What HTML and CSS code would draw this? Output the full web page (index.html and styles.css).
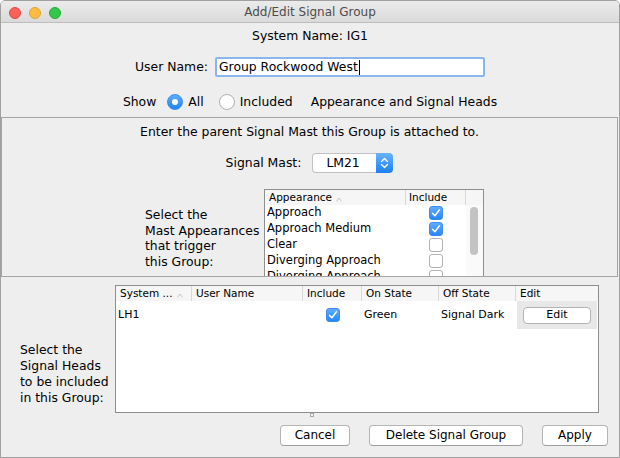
FILE: index.html
```html
<!DOCTYPE html>
<html>
<head>
<meta charset="utf-8">
<title>Add/Edit Signal Group</title>
<link rel="stylesheet" href="styles.css">
</head>
<body>
<div class="window">
  <div class="titlebar">
    <div class="lights"><span class="light red"></span><span class="light yellow"></span><span class="light green"></span></div>
    <div class="title">Add/Edit Signal Group</div>
    <div></div>
  </div>

  <div class="row sysname">System Name: IG1</div>

  <div class="row userrow">
    <span>User Name:</span>
    <div class="field"><span>Group Rockwood West</span><span class="caret"></span></div>
  </div>

  <div class="row showrow">
    <span>Show</span>
    <span class="radio on first"></span><span class="rlabel">All</span>
    <span class="radio second"></span><span class="rlabel">Included</span>
    <span class="showtext">Appearance and Signal Heads</span>
  </div>

  <div class="panel">
    <div class="row intro">Enter the parent Signal Mast this Group is attached to.</div>
    <div class="row mastrow">
      <span>Signal Mast:</span>
      <div class="combo">
        <span class="combo-value">LM21</span>
        <span class="combo-arrows">
          <svg width="17" height="20" viewBox="0 0 17 20"><path d="M5.5 8.5 L8.5 5.5 L11.5 8.5" stroke="#fff" stroke-width="1.3" fill="none" stroke-linecap="round" stroke-linejoin="round"/><path d="M5.5 11.5 L8.5 14.5 L11.5 11.5" stroke="#fff" stroke-width="1.3" fill="none" stroke-linecap="round" stroke-linejoin="round"/></svg>
        </span>
      </div>
    </div>
    <div class="appgrid">
      <div class="desc">Select the<br>Mast Appearances<br>that trigger<br>this Group:</div>
      <div class="apptable">
        <div class="thead">
          <span class="hc ac1">Appearance<svg class="sort" width="6" height="5" viewBox="0 0 6 5"><path d="M0.5 4.5 L3 1 L5.5 4.5" stroke="#c4c4c4" stroke-width="1" fill="none"/></svg></span>
          <span class="hc ac2">Include</span>
          <span class="hc ac3 last"></span>
        </div>
        <div class="atbody">
          <div class="atrows">
            <div class="arow"><span class="aname">Approach</span><span class="acb"><span class="cb on"><svg width="14" height="14" viewBox="0 0 14 14"><path d="M3.6 7.4 L5.9 9.8 L10.4 3.9" stroke="#fff" stroke-width="1.5" fill="none" stroke-linecap="round" stroke-linejoin="round"/></svg></span></span></div>
            <div class="arow"><span class="aname">Approach Medium</span><span class="acb"><span class="cb on"><svg width="14" height="14" viewBox="0 0 14 14"><path d="M3.6 7.4 L5.9 9.8 L10.4 3.9" stroke="#fff" stroke-width="1.5" fill="none" stroke-linecap="round" stroke-linejoin="round"/></svg></span></span></div>
            <div class="arow"><span class="aname">Clear</span><span class="acb"><span class="cb"></span></span></div>
            <div class="arow"><span class="aname">Diverging Approach</span><span class="acb"><span class="cb"></span></span></div>
            <div class="arow"><span class="aname">Diverging Approach</span><span class="acb"><span class="cb"></span></span></div>
          </div>
          <div class="vscroll"><div class="thumb"></div></div>
        </div>
      </div>
    </div>
  </div>

  <div class="heads">
    <div class="desc2">Select the<br>Signal Heads<br>to be included<br>in this Group:</div>
    <div class="htable">
      <div class="thead">
        <span class="hc w1">System ...<svg class="sort" width="6" height="5" viewBox="0 0 6 5"><path d="M0.5 4.5 L3 1 L5.5 4.5" stroke="#c4c4c4" stroke-width="1" fill="none"/></svg></span>
        <span class="hc w2">User Name</span>
        <span class="hc w3">Include</span>
        <span class="hc w4">On State</span>
        <span class="hc w5">Off State</span>
        <span class="hc w6 last">Edit</span>
      </div>
      <div class="htrow">
        <span class="td w1">LH1</span>
        <span class="td w2"></span>
        <span class="td w3 center"><span class="cb on"><svg width="14" height="14" viewBox="0 0 14 14"><path d="M3.6 7.4 L5.9 9.8 L10.4 3.9" stroke="#fff" stroke-width="1.5" fill="none" stroke-linecap="round" stroke-linejoin="round"/></svg></span></span>
        <span class="td w4">Green</span>
        <span class="td w5">Signal Dark</span>
        <span class="td w6 editcell"><span class="editbtn">Edit</span></span>
      </div>
    </div>
  </div>

  <div class="grip"><span></span></div>

  <div class="buttons">
    <div class="btn cancel">Cancel</div>
    <div class="btn delete">Delete Signal Group</div>
    <div class="btn apply">Apply</div>
  </div>
</div>
</body>
</html>
```

FILE: styles.css
```css
* { box-sizing: border-box; margin: 0; padding: 0; }
html, body { width: 620px; height: 458px; overflow: hidden; background: #ffffff; }
body { font-family: "DejaVu Sans", sans-serif; font-size: 12.4px; color: #000; line-height: 1.2; }

.window {
  width: 620px; height: 458px;
  border: 1px solid #a0a0a0;
  border-radius: 5px 5px 0 0;
  background: #eeeeee;
  display: flex; flex-direction: column;
  overflow: hidden;
}

.titlebar {
  flex: none; height: 22px; padding-top: 2px;
  display: grid; grid-template-columns: 1fr auto 1fr; align-items: center;
  background: linear-gradient(#ebebeb, #dadada);
  border-bottom: 1px solid #bdbdbd;
}
.lights { display: flex; gap: 8px; padding-left: 8px; }
.light { width: 12px; height: 12px; border-radius: 50%; }
.red { background: #fc605b; border: 1px solid #de4a45; }
.yellow { background: #fdbc40; border: 1px solid #dea236; }
.green { background: #34c84a; border: 1px solid #27aa35; }
.title { color: #4d4d4d; font-size: 12px; }

.row { flex: none; display: flex; align-items: center; justify-content: center; }
.sysname { height: 26px; }
.userrow { height: 36px; gap: 7px; }
.field {
  width: 270px; height: 20px;
  border: 2px solid #8ab6ee; border-radius: 2px;
  background: #fff;
  display: flex; align-items: center; padding-left: 2px;
}
.caret { width: 1px; height: 15px; background: #000; margin-left: 1px; }

.showrow { height: 32px; padding-top: 2px; }
.radio {
  width: 16px; height: 16px; border-radius: 50%;
  background: #fff; border: 1px solid #b0b0b0;
  display: inline-flex; align-items: center; justify-content: center;
}
.radio.on { background: linear-gradient(#5eaafb, #2185f8); border-color: #3a8ef2; }
.radio.on::after { content: ""; width: 6px; height: 6px; border-radius: 50%; background: #fff; }
.radio.first { margin-left: 11px; }
.radio.second { margin-left: 15px; }
.rlabel { margin-left: 5px; }
.showtext { margin-left: 18px; }

.panel {
  flex: none; height: 160px; margin-right: 1px;
  border: 1px solid #a4a4a4;
  overflow: hidden;
  display: flex; flex-direction: column;
}
.intro { height: 28px; }
.mastrow { height: 34px; gap: 11px; }
.combo { display: flex; width: 81px; height: 20px; }
.combo-value {
  flex: 1; display: flex; align-items: center; padding-left: 13px;
  background: #fff; border: 1px solid #c2c2c2; border-right: none;
  border-radius: 4px 0 0 4px;
}
.combo-arrows {
  width: 17px; height: 20px; display: flex;
  background: linear-gradient(#6bb3fb, #1a80f8);
  border-radius: 0 4px 4px 0;
}

.appgrid { flex: none; display: flex; align-items: center; margin-top: 9px; padding-left: 143px; }
.desc { width: 119px; line-height: 15.5px; white-space: nowrap; }
.apptable {
  flex: none; width: 220px; height: 98px;
  border: 1px solid #8e8e8e; background: #fff;
  font-size: 11.5px; display: flex; flex-direction: column;
}
.thead { flex: none; display: flex; height: 15px; background: #f6f6f6; font-size: 10.5px; }
.hc { display: flex; align-items: center; padding-left: 4px; border-right: 1px solid #d8d8d8; white-space: nowrap; }
.hc.last { border-right: none; }
.sort { margin-left: 4px; margin-top: 3px; }
.ac1 { width: 141px; }
.ac2 { width: 60px; padding-left: 3px; }
.ac3 { flex: 1; }
.atbody { flex: 1; display: flex; }
.atrows { width: 201px; }
.arow { height: 16px; display: flex; align-items: center; }
.aname { width: 141px; padding-left: 2px; white-space: nowrap; }
.acb { width: 60px; display: flex; justify-content: center; }
.vscroll { flex: 1; padding: 2px 4px 0 4px; background: #fafafa; }
.thumb { width: 8px; height: 48px; border-radius: 4px; background: #c3c3c3; }

.cb {
  width: 14px; height: 14px; border-radius: 3px;
  border: 1px solid #b0b0b0; background: #fff;
  display: flex; align-items: center; justify-content: center;
}
.cb.on { background: linear-gradient(#62acfb, #2687f8); border-color: #3a8cf0; }
.cb svg { flex: none; }

.heads { flex: none; display: flex; margin-top: 8px; padding-left: 19px; }
.desc2 { width: 95px; align-self: flex-end; margin-bottom: 7px; line-height: 16px; white-space: nowrap; }
.htable {
  flex: none; width: 484px; height: 128px;
  border: 1px solid #8e8e8e; background: #fff;
  font-size: 11px;
}
.htrow { display: flex; height: 28px; align-items: center; }
.w1 { width: 76px; }
.w2 { width: 111px; }
.w3 { width: 59px; }
.w4 { width: 77px; }
.w5 { width: 77px; }
.w6 { width: 82px; }
.td { padding-left: 2px; white-space: nowrap; display: flex; align-items: center; }
.td.center { justify-content: center; padding-left: 0; }
.editcell {
  height: 28px; width: 80px; margin-left: 1px; padding-left: 0;
  background: #e8e8e8; justify-content: center;
}
.editbtn {
  width: 68px; height: 17px;
  border: 1px solid #b3b3b3; border-radius: 4px; background: #fff;
  display: flex; align-items: center; justify-content: center;
}

.grip { flex: none; height: 12px; display: flex; justify-content: center; padding-left: 3px; }
.grip span { width: 4px; height: 4px; border: 1px solid #a8a8a8; background: #f4f4f4; }

.buttons { flex: none; height: 21px; display: flex; justify-content: flex-end; gap: 19px; padding-right: 11px; }
.btn {
  height: 21px; font-size: 12px;
  border: 1px solid #b4b4b4; border-bottom-color: #9e9e9e; border-radius: 4px;
  background: #fff;
  display: flex; align-items: center; justify-content: center;
}
.cancel { width: 70px; }
.delete { width: 154px; }
.apply { width: 66px; }
```
